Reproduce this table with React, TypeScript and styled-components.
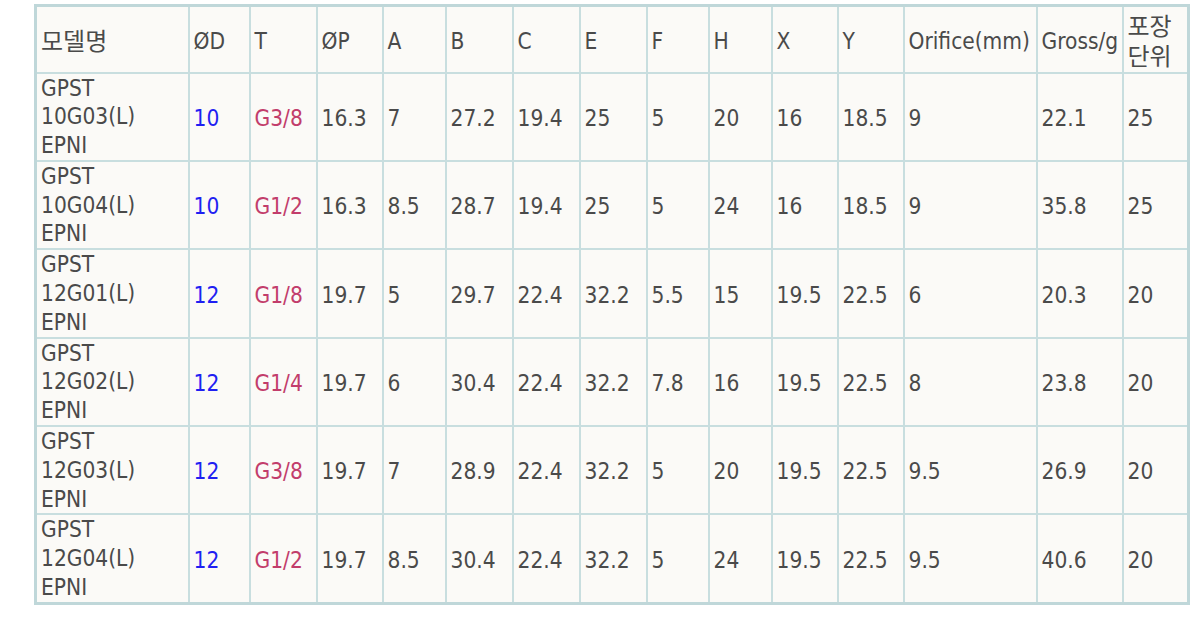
import React from "react";
import styled, { createGlobalStyle } from "styled-components";

const Global = createGlobalStyle`
  html, body { margin: 0; padding: 0; background: #ffffff; }
  body { width: 1200px; height: 620px; overflow: hidden; }
`;

const Page = styled.div`
  padding: 4px 0 0 34px;
`;

const Table = styled.table`
  width: 1153px;
  table-layout: fixed;
  border-collapse: collapse;
  border: 3px solid #bfd7d9;
  background: #fbfaf7;
  font-family: "DejaVu Sans Condensed", "DejaVu Sans", "Noto Sans CJK KR", sans-serif;
  font-stretch: condensed;
  font-size: 22.5px;
  line-height: 28.8px;
  color: #4a4a4a;
`;

const HeadRow = styled.tr`
  height: 67px;
`;

const BodyRow = styled.tr`
  height: 88px;
`;

const Cell = styled.td`
  border: 2px solid #c8dedf;
  padding: 0 2px 0 4px;
  vertical-align: middle;
  text-align: left;
  white-space: nowrap;
  overflow: hidden;
  color: #4a4a4a;
`;

const ValueCell = styled(Cell)<{ $tone?: "blue" | "pink" }>`
  padding-top: 3px;
  color: ${(p) => (p.$tone === "blue" ? "#1f1ff2" : p.$tone === "pink" ? "#c23d6b" : "#4a4a4a")};
`;

const HeadCell = styled(Cell).attrs({ as: "th" })`
  font-weight: normal;
  padding-top: 5px;
`;

const Korean = styled.span`
  font-family: "Noto Sans CJK KR", sans-serif;
  font-stretch: normal;
  font-size: 24px;
`;

const Wrap = styled.span`
  white-space: normal;
  display: block;
  line-height: 28px;
  margin-top: -2px;
`;

const widths = [153, 61, 67, 66, 63, 67, 67, 67, 62, 63, 66, 66, 133, 86, 66];

const headers = ["ØD", "T", "ØP", "A", "B", "C", "E", "F", "H", "X", "Y", "Orifice(mm)", "Gross/g"];

type Row = { model: [string, string, string]; vals: string[] };

const rows: Row[] = [
  { model: ["GPST", "10G03(L)", "EPNI"], vals: ["10", "G3/8", "16.3", "7", "27.2", "19.4", "25", "5", "20", "16", "18.5", "9", "22.1", "25"] },
  { model: ["GPST", "10G04(L)", "EPNI"], vals: ["10", "G1/2", "16.3", "8.5", "28.7", "19.4", "25", "5", "24", "16", "18.5", "9", "35.8", "25"] },
  { model: ["GPST", "12G01(L)", "EPNI"], vals: ["12", "G1/8", "19.7", "5", "29.7", "22.4", "32.2", "5.5", "15", "19.5", "22.5", "6", "20.3", "20"] },
  { model: ["GPST", "12G02(L)", "EPNI"], vals: ["12", "G1/4", "19.7", "6", "30.4", "22.4", "32.2", "7.8", "16", "19.5", "22.5", "8", "23.8", "20"] },
  { model: ["GPST", "12G03(L)", "EPNI"], vals: ["12", "G3/8", "19.7", "7", "28.9", "22.4", "32.2", "5", "20", "19.5", "22.5", "9.5", "26.9", "20"] },
  { model: ["GPST", "12G04(L)", "EPNI"], vals: ["12", "G1/2", "19.7", "8.5", "30.4", "22.4", "32.2", "5", "24", "19.5", "22.5", "9.5", "40.6", "20"] },
];

export default function App() {
  return (
    <>
      <Global />
      <Page>
        <Table>
          <colgroup>
            {widths.map((w, i) => (
              <col key={i} style={{ width: w }} />
            ))}
          </colgroup>
          <thead>
            <HeadRow>
              <HeadCell>
                <Korean>모델명</Korean>
              </HeadCell>
              {headers.map((h) => (
                <HeadCell key={h}>{h}</HeadCell>
              ))}
              <HeadCell>
                <Wrap>
                  <Korean>포장</Korean>
                  <br />
                  <Korean>단위</Korean>
                </Wrap>
              </HeadCell>
            </HeadRow>
          </thead>
          <tbody>
            {rows.map((r) => (
              <BodyRow key={r.model[1]}>
                <Cell>
                  {r.model[0]}
                  <br />
                  {r.model[1]}
                  <br />
                  {r.model[2]}
                </Cell>
                {r.vals.map((v, i) => (
                  <ValueCell key={i} $tone={i === 0 ? "blue" : i === 1 ? "pink" : undefined}>
                    {v}
                  </ValueCell>
                ))}
              </BodyRow>
            ))}
          </tbody>
        </Table>
      </Page>
    </>
  );
}
